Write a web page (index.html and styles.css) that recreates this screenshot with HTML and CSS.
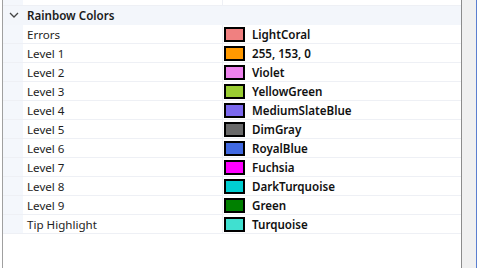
FILE: index.html
```html
<!DOCTYPE html>
<html lang="en">
<head>
  <meta charset="UTF-8">
  <title>Rainbow Colors</title>
  <link rel="stylesheet" href="styles.css">
</head>
<body>
  <div class="frame">
    <div class="grid">
      <div class="row tail"><span class="gutter"></span><span class="name"></span><span class="value"></span></div>

      <div class="row group">
        <span class="gutter">
          <svg class="chevron" width="10" height="6" viewBox="0 0 10 6"><path d="M1 1 L5 5 L9 1" fill="none" stroke="#444" stroke-width="1.3"/></svg>
        </span>
        <span class="group-title">Rainbow Colors</span>
      </div>

      <div class="row"><span class="gutter"></span><span class="name">Errors</span><span class="value"><i class="swatch" style="background:#f08080"></i>LightCoral</span></div>
      <div class="row"><span class="gutter"></span><span class="name">Level 1</span><span class="value"><i class="swatch" style="background:#ff9900"></i>255, 153, 0</span></div>
      <div class="row"><span class="gutter"></span><span class="name">Level 2</span><span class="value"><i class="swatch" style="background:#ee82ee"></i>Violet</span></div>
      <div class="row"><span class="gutter"></span><span class="name">Level 3</span><span class="value"><i class="swatch" style="background:#9acd32"></i>YellowGreen</span></div>
      <div class="row"><span class="gutter"></span><span class="name">Level 4</span><span class="value"><i class="swatch" style="background:#7b68ee"></i>MediumSlateBlue</span></div>
      <div class="row"><span class="gutter"></span><span class="name">Level 5</span><span class="value"><i class="swatch" style="background:#696969"></i>DimGray</span></div>
      <div class="row"><span class="gutter"></span><span class="name">Level 6</span><span class="value"><i class="swatch" style="background:#4169e1"></i>RoyalBlue</span></div>
      <div class="row"><span class="gutter"></span><span class="name">Level 7</span><span class="value"><i class="swatch" style="background:#ff00ff"></i>Fuchsia</span></div>
      <div class="row"><span class="gutter"></span><span class="name">Level 8</span><span class="value"><i class="swatch" style="background:#00ced1"></i>DarkTurquoise</span></div>
      <div class="row"><span class="gutter"></span><span class="name">Level 9</span><span class="value"><i class="swatch" style="background:#008000"></i>Green</span></div>
      <div class="row"><span class="gutter"></span><span class="name">Tip Highlight</span><span class="value"><i class="swatch" style="background:#40e0d0"></i>Turquoise</span></div>
    </div>
    <div class="scroll"></div>
  </div>
</body>
</html>
```

FILE: styles.css
```css
html, body { margin: 0; padding: 0; background: #fff; }
body { font-family: "Noto Sans", "Open Sans", sans-serif; font-size: 11.6px; color: #1e1e1e; }

.frame { display: flex; height: 268px; margin-left: 2px; border-left: 1px solid #a0a0a0; }
.grid { flex: 1; display: flex; flex-direction: column; }
.scroll { width: 14px; background: #f0f0f0; border-left: 1px solid #8c8c8c; border-right: 1px solid #5b7fd0; }

.row { display: grid; grid-template-columns: 20px 199px 1px 1fr; height: 18px; border-bottom: 1px solid #eef0f5; }
.row .gutter { background: #f4f7fc; }
.row .name { display: flex; align-items: center; padding-left: 4px; background: #fff; grid-column: 2; }
.row .value { display: flex; align-items: center; padding-left: 1px; background: #fff; grid-column: 4; font-weight: 600; color: #111; }
.row::after { content: ""; grid-column: 3; grid-row: 1; background: #eef0f5; }

.tail { height: 5px; }

.group { background: #f3f6fb; border-bottom: 1px solid #f3f6fb; }
.group .gutter { display: flex; align-items: center; justify-content: center; padding-left: 2px; background: transparent; }
.group::after { display: none; }
.group-title { grid-column: 2 / 5; display: flex; align-items: center; padding-left: 4px; font-weight: 600; color: #1a1a1a; }

.swatch { display: inline-block; width: 17px; height: 11px; border: 2px solid #000; margin-right: 7px; }
```
